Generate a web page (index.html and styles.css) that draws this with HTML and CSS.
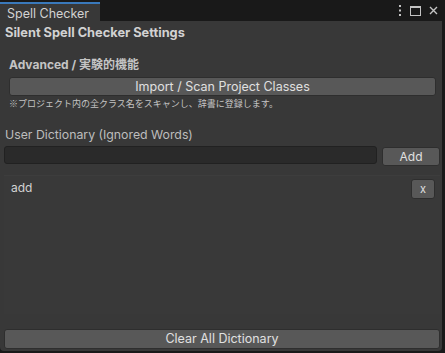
FILE: index.html
```html
<!DOCTYPE html>
<html lang="ja">
<head>
    <meta charset="UTF-8">
    <title>Spell Checker</title>
    <link rel="stylesheet" href="styles.css">
</head>
<body>
    <div class="window">
        <div class="tabbar">
            <div class="tab">Spell Checker</div>
            <div class="tab-icons">
                <svg width="4" height="11" viewBox="0 0 4 11"><rect x="1" y="0" width="2" height="2" fill="#c4c4c4"/><rect x="1" y="4.5" width="2" height="2" fill="#c4c4c4"/><rect x="1" y="9" width="2" height="2" fill="#c4c4c4"/></svg>
                <svg width="11" height="10" viewBox="0 0 11 10"><rect x="0.5" y="0.5" width="10" height="9" fill="none" stroke="#c4c4c4"/><rect x="0" y="0" width="11" height="2" fill="#c4c4c4"/></svg>
                <svg width="9" height="9" viewBox="0 0 9 9"><path d="M1 1 L8 8 M8 1 L1 8" stroke="#c4c4c4" stroke-width="1.4"/></svg>
            </div>
        </div>

        <div class="panel">
            <div class="title">Silent Spell Checker Settings</div>

            <div class="advanced">
                <div class="section-head">Advanced / 実験的機能</div>
                <button class="btn btn-wide">Import / Scan Project Classes</button>
                <div class="note">※プロジェクト内の全クラス名をスキャンし、辞書に登録します。</div>
            </div>

            <div class="label">User Dictionary (Ignored Words)</div>
            <div class="add-row">
                <div class="field"></div>
                <button class="btn btn-add">Add</button>
            </div>

            <div class="word-list">
                <div class="word-row">
                    <span>add</span>
                    <button class="btn btn-remove">x</button>
                </div>
            </div>

            <button class="btn btn-clear">Clear All Dictionary</button>
        </div>
    </div>
</body>
</html>
```

FILE: styles.css
```css
* {
    box-sizing: border-box;
}

body {
    margin: 0;
    width: 445px;
    height: 353px;
    background: #191919;
    font-family: 'Inter', 'Noto Sans CJK JP', sans-serif;
    font-size: 12px;
    color: #c4c4c4;
    overflow: hidden;
}

.window {
    display: flex;
    flex-direction: column;
    width: 442px;
    height: 351px;
}

.tabbar {
    display: flex;
    align-items: flex-end;
    justify-content: space-between;
    height: 21px;
    background: #191919;
}

.tab {
    width: 100px;
    height: 19px;
    padding: 2px 0 0 7px;
    background: #383838;
    border-top: 2px solid #3a79bb;
    color: #d2d2d2;
    font-size: 12.5px;
    line-height: 15px;
}

.tab-icons {
    display: flex;
    align-items: center;
    gap: 8px;
    height: 21px;
    padding: 0 4px 0 0;
}

.panel {
    flex: 1;
    display: flex;
    flex-direction: column;
    background: #383838;
    border-radius: 0 0 4px 4px;
    padding: 4px 2px 2px 4px;
}

.title {
    font-weight: 700;
    font-size: 12.8px;
    color: #d2d2d2;
    padding-left: 1px;
    line-height: 16px;
}

.advanced {
    padding: 16px 4px 0 5px;
}

.section-head {
    font-weight: 700;
    font-size: 12px;
    color: #c4c4c4;
    line-height: 16px;
}

.btn {
    font-family: 'Inter', 'Noto Sans CJK JP', sans-serif;
    font-size: 12px;
    color: #e0e0e0;
    background: #585858;
    border: 1px solid #2e2e2e;
    border-radius: 3px;
    padding: 0;
    line-height: 16px;
}

.btn-wide {
    display: block;
    width: 100%;
    height: 19px;
    margin-top: 4px;
    font-size: 12.5px;
}

.note {
    font-family: 'Noto Sans CJK JP', sans-serif;
    font-size: 9px;
    line-height: 14px;
    color: #c4c4c4;
    margin-top: 1px;
}

.label {
    margin-top: 16px;
    padding-left: 1px;
    line-height: 16px;
    color: #bdbdbd;
    font-size: 12.3px;
}

.add-row {
    display: flex;
    gap: 5px;
    margin-top: 3px;
}

.field {
    flex: 1;
    height: 18px;
    background: #2a2a2a;
    border: 1px solid #212121;
    border-radius: 3px;
}

.btn-add {
    width: 58px;
    height: 19px;
    margin-top: 1px;
}

.word-list {
    flex: 1;
    margin: 9px 0 15px 0;
    background: #393939;
    border-top: 1px solid #3d3d3d;
}

.word-row {
    display: flex;
    justify-content: space-between;
    align-items: center;
    padding: 3px 5px 0 7px;
}

.word-row span {
    color: #d2d2d2;
    margin-top: -4px;
}

.btn-remove {
    width: 24px;
    height: 20px;
    font-size: 11px;
}

.btn-clear {
    height: 20px;
    width: 100%;
    font-size: 12.5px;
}
```
